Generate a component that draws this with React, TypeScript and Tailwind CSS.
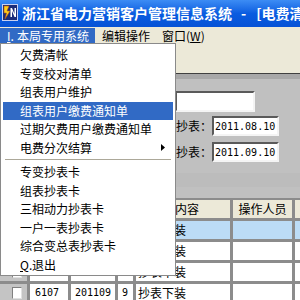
import React from 'react';

const cjk = "font-['Noto_Sans_CJK_SC','Noto_Sans',sans-serif]";
const mono = "font-['DejaVu_Sans_Mono',monospace] text-[10px]";

const menuTop = ['欠费清帐', '专变校对清单', '组表用户维护', '组表用户缴费通知单', '过期欠费用户缴费通知单', '电费分次结算'];
const menuBottom = ['专变抄表卡', '组表抄表卡', '三相动力抄表卡', '一户一表抄表卡', '综合变总表抄表卡'];

function AppIcon() {
    return (
        <svg width="16" height="17" viewBox="0 0 16 17" className="shrink-0">
            <rect x="0.5" y="0.5" width="15" height="16" fill="#1c2c78" stroke="#c8d0f0" />
            <path d="M2 2 L7 2 L5 7 L8 7 L3 15 L4.5 9 L2 9 Z" fill="#ffd21c" stroke="#c05010" strokeWidth="0.6" />
            <path d="M8.5 4 L10 4 L12.5 10 L12.5 4 L14 4 L14 13 L12.5 13 L10 7 L10 13 L8.5 13 Z" fill="#ffffff" />
        </svg>
    );
}

function Sunken({ className = '', children }: { className?: string; children?: React.ReactNode }) {
    return (
        <div className={`shrink-0 bg-white border-2 border-t-[#5a5a5a] border-l-[#5a5a5a] border-b-[#f4f4f4] border-r-[#f4f4f4] flex items-center ${className}`}>
            {children}
        </div>
    );
}

function MenuItem({ label, active, arrow }: { label: React.ReactNode; active?: boolean; arrow?: boolean }) {
    return (
        <div className={`h-[18.5px] flex items-center pl-[17px] pr-[8px] justify-between ${active ? 'bg-[#316ac5] text-white' : 'text-black'}`}>
            <span>{label}</span>
            {arrow && (
                <svg width="4" height="7" viewBox="0 0 4 7">
                    <path d="M0 0 L4 3.5 L0 7 Z" fill="#000" />
                </svg>
            )}
        </div>
    );
}

function DataRow({ cells, active }: { cells: string[]; active?: boolean }) {
    const bg = active ? 'bg-[#bcdcf6]' : 'bg-white';
    return (
        <div className="flex gap-[3px] h-[18px] text-[12px] leading-[18px]">
            <div className="w-[27px] bg-[#c4c4c4] flex items-center pl-[12px]">
                <div className="w-[10px] h-[12px] bg-white border border-t-[#808080] border-l-[#808080] border-b-[#e0e0e0] border-r-[#e0e0e0]" />
            </div>
            <div className={`w-[38px] ${bg} pl-[5px] ${mono}`}>{cells[0]}</div>
            <div className={`w-[44px] ${bg} pl-[4px] ${mono}`}>{cells[1]}</div>
            <div className={`w-[15px] ${bg} pl-[4px] ${mono}`}>{cells[2]}</div>
            <div className={`w-[94px] ${bg} pl-[2px]`}>{cells[3]}</div>
            <div className={`w-[59px] ${bg}`}></div>
            <div className={`flex-1 ${bg}`}></div>
        </div>
    );
}

export default function App() {
    return (
        <div className={`relative w-[300px] h-[300px] overflow-hidden bg-[#c0c0c0] ${cjk}`}>
            {/* title bar */}
            <div className="h-[27px] bg-gradient-to-b from-[#3c8cf4] via-[#0a5ce0] to-[#0652d6] flex items-center pl-[2px] pb-[2px] whitespace-nowrap overflow-hidden">
                <AppIcon />
                <span className="shrink-0 ml-[4px] text-white font-bold text-[14px] leading-none">浙江省电力营销客户管理信息系统</span>
                <span className="shrink-0 ml-[9px] text-white font-bold text-[14px] leading-none">-</span>
                <span className="shrink-0 ml-[10px] text-white font-bold text-[14px] leading-none">[电费清</span>
            </div>

            {/* menu bar */}
            <div className="h-[17px] bg-[#ece9d8] pt-[1px] flex text-[12px] whitespace-nowrap">
                <div className="h-[15px] bg-[#316ac5] text-white flex items-center pl-[7px] pr-[6px]">
                    <span className="inline-block w-[10px]"><span className="underline">I</span>.</span>
                    <span>本局专用系统</span>
                </div>
                <div className="h-[15px] flex items-center px-[7px]">编辑操作</div>
                <div className="h-[15px] flex items-center px-[5px]">
                    窗口(<span className="underline">W</span>)
                </div>
            </div>

            {/* toolbar strip */}
            <div className="h-[29px] bg-[#ece9d8]" />
            <div className="h-[1px] bg-[#404040]" />
            <div className="h-[5px] bg-[#a8a8a8]" />

            {/* query form */}
            <div className="pt-[12px] text-[12px] whitespace-nowrap">
                <Sunken className="ml-[175px] w-[80px] h-[21px]" />
                <div className="mt-[4px] flex items-center h-[20px]">
                    <span className="ml-[176px] w-[36px] text-right">抄表：</span>
                    <Sunken className={`w-[67px] h-[20px] pl-[1px] ${mono}`}>2011.08.10</Sunken>
                </div>
                <div className="mt-[6px] flex items-center h-[20px]">
                    <span className="ml-[176px] w-[36px] text-right">抄表：</span>
                    <Sunken className={`w-[67px] h-[20px] pl-[1px] ${mono}`}>2011.09.10</Sunken>
                </div>
            </div>

            <div className="h-[11px]" />
            <div className="h-[14px] bg-[#bcbcbc]" />
            <div className="h-[11px]" />

            {/* data grid */}
            <div className="bg-[#8c8c8c] pt-[2px] flex flex-col gap-[3px]">
                <div className="flex gap-[3px] h-[18px] text-[12px] leading-[18px] text-black whitespace-nowrap">
                    <div className="w-[27px] bg-[#ece9d8]" />
                    <div className="w-[38px] bg-[#ece9d8]" />
                    <div className="w-[44px] bg-[#ece9d8]" />
                    <div className="w-[15px] bg-[#ece9d8]" />
                    <div className="w-[94px] bg-[#ece9d8] pl-[39px]">内容</div>
                    <div className="w-[59px] bg-[#ece9d8] text-center">操作人员</div>
                    <div className="flex-1 bg-[#ece9d8]" />
                </div>
                <DataRow active cells={['', '', '', '抄表下装']} />
                <DataRow cells={['', '', '', '抄表下装']} />
                <DataRow cells={['', '', '', '抄表下装']} />
                <DataRow cells={['6107', '201109', '9', '抄表下装']} />
            </div>

            {/* dropdown menu */}
            <div className="absolute left-0 top-[43px] w-[176px] bg-white border border-[#8a8a8a] px-[2px] pt-[2px] pb-[1px] text-[12px] whitespace-nowrap">
                {menuTop.map((m, i) => (
                    <MenuItem key={m} label={m} active={i === 3} arrow={i === 5} />
                ))}
                <div className="h-[6px] pt-[2px] px-[2px]">
                    <div className="h-[1px] bg-[#aca899]" />
                </div>
                {menuBottom.map((m) => (
                    <MenuItem key={m} label={m} />
                ))}
                <MenuItem
                    label={
                        <>
                            <span className="inline-block w-[12px]"><span className="underline">Q</span>.</span>退出
                        </>
                    }
                />
            </div>
        </div>
    );
}
